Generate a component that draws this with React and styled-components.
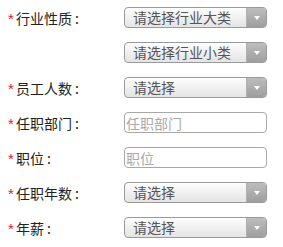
import styled, { createGlobalStyle } from "styled-components";

const GlobalStyle = createGlobalStyle`
  body {
    margin: 0;
    background: #fff;
    font-family: "Noto Sans CJK SC", "Noto Sans", sans-serif;
  }
`;

const Form = styled.div`
  padding: 0 0 0 8px;
  width: 283px;
  box-sizing: border-box;
`;

const Row = styled.div`
  display: flex;
  align-items: center;
  height: 35px;
`;

const Label = styled.div`
  width: 116px;
  flex-shrink: 0;
  display: flex;
  align-items: center;
  font-size: 14px;
  color: #222;
  line-height: 1;
`;

const Star = styled.span`
  color: #e0201a;
  font-family: "Liberation Sans", sans-serif;
  font-size: 15px;
  width: 8px;
  margin-top: 2px;
`;

const Colon = styled.span`
  margin-left: 3px;
`;

const Select = styled.div`
  width: 143px;
  height: 21px;
  box-sizing: border-box;
  display: flex;
  border: 1px solid #9a9a9a;
  border-radius: 4px;
  overflow: hidden;
  background: linear-gradient(#fdfdfd, #e4e4e4);
  box-shadow: inset 0 1px 0 #fff;
`;

const SelectText = styled.div`
  flex: 1;
  padding-left: 8px;
  font-size: 14px;
  line-height: 19px;
  color: #555;
  white-space: nowrap;
`;

const Arrow = styled.div`
  width: 19px;
  display: flex;
  align-items: center;
  justify-content: center;
  background: linear-gradient(#bdbdbd, #9e9e9e);
  border-left: 1px solid #b0b0b0;

  &::after {
    content: "";
    border-left: 3px solid transparent;
    border-right: 3px solid transparent;
    border-top: 4px solid #fff;
  }
`;

const Input = styled.input`
  width: 143px;
  height: 21px;
  box-sizing: border-box;
  border: 1px solid #a8a8a8;
  border-radius: 4px;
  padding: 0 0 0 1px;
  font-family: "Noto Sans CJK SC", "Noto Sans", sans-serif;
  font-size: 14px;
  color: #333;
  background: #fff;
  outline: none;

  &::placeholder {
    color: #aaa;
  }
`;

const Field = ({ label, children }) => (
  <Row>
    <Label>
      {label && (
        <>
          <Star>*</Star>
          {label}
          <Colon>:</Colon>
        </>
      )}
    </Label>
    {children}
  </Row>
);

const Dropdown = ({ text }) => (
  <Select>
    <SelectText>{text}</SelectText>
    <Arrow />
  </Select>
);

const App = () => {
  return (
    <Form>
      <GlobalStyle />
      <Field label="行业性质">
        <Dropdown text="请选择行业大类" />
      </Field>
      <Field>
        <Dropdown text="请选择行业小类" />
      </Field>
      <Field label="员工人数">
        <Dropdown text="请选择" />
      </Field>
      <Field label="任职部门">
        <Input placeholder="任职部门" />
      </Field>
      <Field label="职位">
        <Input placeholder="职位" />
      </Field>
      <Field label="任职年数">
        <Dropdown text="请选择" />
      </Field>
      <Field label="年薪">
        <Dropdown text="请选择" />
      </Field>
    </Form>
  );
};

export default App;
